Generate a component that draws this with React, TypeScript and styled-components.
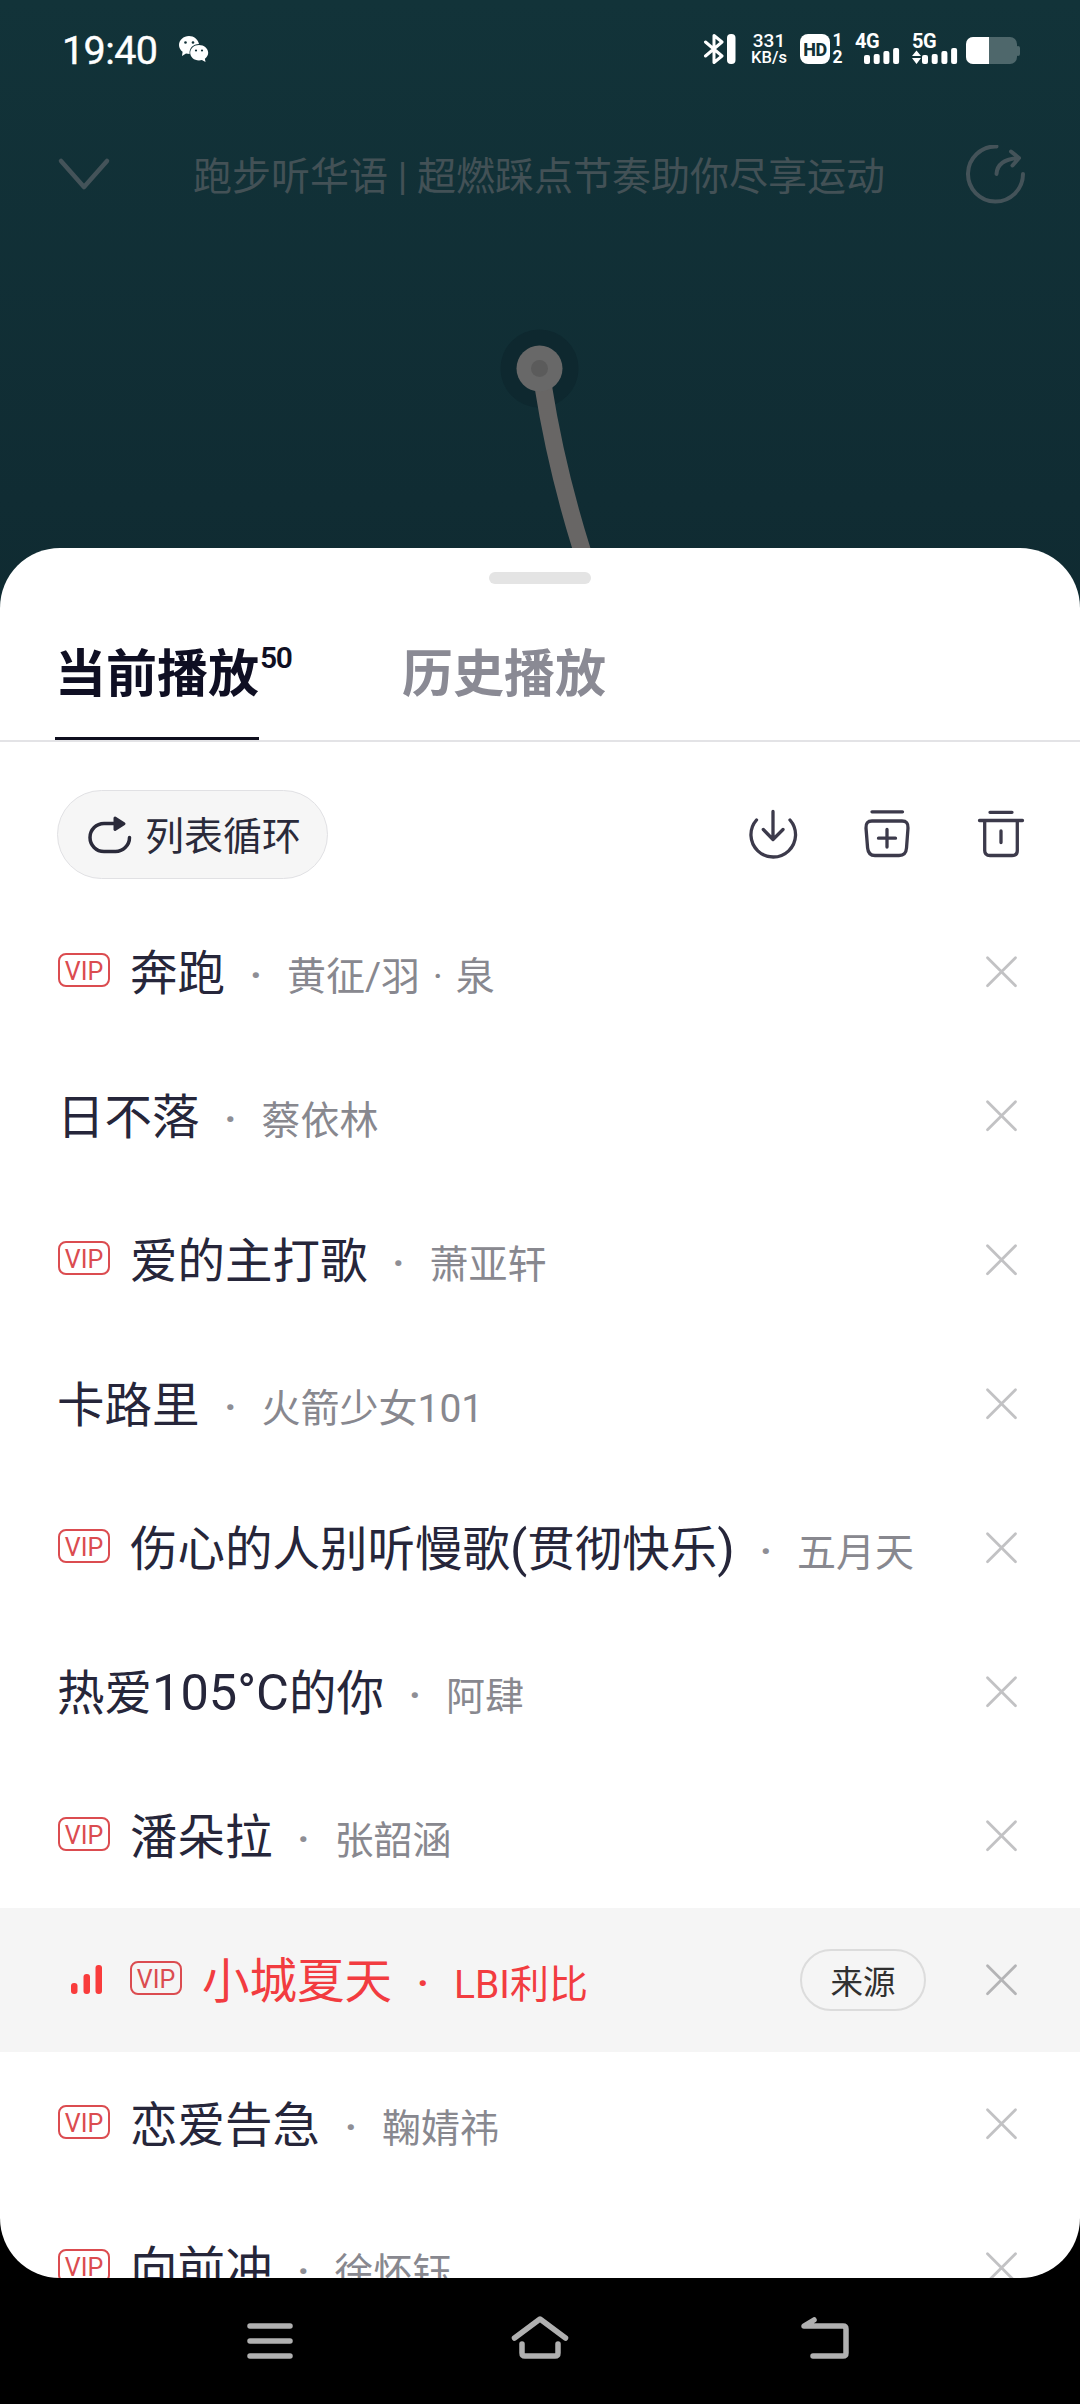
import React from "react";
import styled, { createGlobalStyle } from "styled-components";

const GlobalStyle = createGlobalStyle`
  *, *::before, *::after { box-sizing: border-box; }
  html, body { margin: 0; padding: 0; background: #000; }
  button { border: 0; padding: 0; margin: 0; background: none; font: inherit; color: inherit; display: flex; }
  svg { display: block; flex: none; }
`;

const Screen = styled.div`
  width: 1080px;
  height: 2404px;
  overflow: hidden;
  display: flex;
  flex-direction: column;
  font-family: Roboto, "Noto Sans CJK SC", sans-serif;
  background: linear-gradient(180deg, #123339 0, #102c33 500px, #0f2a30 700px, #000 700px);
`;

const StatusBar = styled.header`
  display: flex;
  align-items: center;
  justify-content: space-between;
  height: 97px;
  padding: 0 60px 0 62px;
  color: #fff;
`;

const StatusGroup = styled.div<{ $gap: number }>`
  display: flex;
  align-items: center;
  gap: ${(p) => p.$gap}px;
`;

const Clock = styled.time`
  width: 95px;
  font-size: 39.5px;
  line-height: 44px;
  letter-spacing: -0.6px;
  font-weight: 400;
  -webkit-text-stroke: 0.4px #fff;
  white-space: nowrap;
  padding-top: 4px;
`;

const NetSpeed = styled.div`
  width: 36px;
  height: 34px;
  display: flex;
  flex-direction: column;
  align-items: center;
  font-size: 19px;
  font-weight: 500;
  line-height: 17px;
  white-space: nowrap;
  margin: 0 13px 0 14px;
  small { font-size: 16.5px; line-height: 17px; }
`;

const HdBadge = styled.div`
  display: flex;
  gap: 1px;
  b {
    width: 30px;
    height: 30px;
    border-radius: 8px;
    background: #fff;
    color: #123238;
    font-size: 18px;
    line-height: 31px;
    text-align: center;
    letter-spacing: -0.5px;
    font-weight: 800;
  }
`;

const SimIndex = styled.div`
  width: 13px;
  display: flex;
  flex-direction: column;
  justify-content: space-between;
  text-align: center;
  font-size: 17.5px;
  line-height: 13px;
  font-weight: 700;
`;

const Signal = styled.div`
  width: 46px;
  height: 30px;
  margin-left: 11px;
  position: relative;
  svg { position: absolute; inset: 0; }
  b { position: absolute; left: 0; top: -2px; font-size: 20px; line-height: 18px; letter-spacing: -0.5px; }
`;

const BatteryBox = styled.div`
  margin-left: 8px;
  padding-top: 3px;
`;

const PlayerHeader = styled.div`
  display: flex;
  align-items: center;
  justify-content: space-between;
  height: 156px;
  padding: 0 54px 0 56px;
  color: #445359;
`;

const PlayerTitle = styled.h1`
  margin: 0;
  padding-top: 3px;
  font-size: 39px;
  line-height: 56px;
  font-weight: 400;
  color: #435156;
  white-space: nowrap;
`;

const Stage = styled.div`
  height: 295px;
  display: flex;
  justify-content: center;
`;

const Sheet = styled.main`
  height: 1730px;
  flex: none;
  border-radius: 60px;
  background: #fff;
  overflow: hidden;
  display: flex;
  flex-direction: column;
`;

const Handle = styled.div`
  width: 102px;
  height: 12px;
  border-radius: 6px;
  background: #e4e4e4;
  margin: 24px auto 0;
  flex: none;
`;

const Tabs = styled.nav`
  height: 158px;
  flex: none;
  display: flex;
  gap: 143px;
  padding-left: 55px;
  border-bottom: 2px solid #e3e3e6;
`;

const Tab = styled.button<{ $active?: boolean }>`
  position: relative;
  width: 204px;
  height: 156px;
  align-items: center;
  padding-top: 18px;
  font-size: 51px;
  font-weight: 700;
  white-space: nowrap;
  color: ${(p) => (p.$active ? "#0f0f23" : "#8a8a94")};
  border-bottom: 3px solid ${(p) => (p.$active ? "#0f0f1e" : "transparent")};
`;

const TabCount = styled.sup`
  position: absolute;
  left: 205px;
  top: 57px;
  font-size: 30px;
  line-height: 34px;
  font-weight: 600;
  letter-spacing: -1.5px;
`;

const Toolbar = styled.div`
  height: 158px;
  flex: none;
  display: flex;
  align-items: flex-start;
  justify-content: space-between;
  padding: 48px 54px 0 57px;
`;

const ModeButton = styled.button`
  width: 271px;
  height: 89px;
  border-radius: 45px;
  border: 1px solid #e1e1e4;
  background: #f6f6f6;
  align-items: center;
  padding: 0 0 3px 29px;
  gap: 13px;
  font-size: 39px;
  color: #2a2a3a;
  white-space: nowrap;
  svg { margin-top: 3px; }
`;

const Actions = styled.div`
  display: flex;
  gap: 64px;
  padding-top: 18px;
  color: #3c3a4b;
`;

const List = styled.ul`
  list-style: none;
  margin: 0;
  padding: 0;
`;

const Row = styled.li<{ $active?: boolean }>`
  height: 144px;
  display: flex;
  align-items: center;
  padding: 0 59px 0 57px;
  background: ${(p) => (p.$active ? "#f5f5f5" : "transparent")};
  color: ${(p) => (p.$active ? "#f23c40" : "#26263a")};
`;

const VipTag = styled.span`
  width: 52px;
  height: 34px;
  flex: none;
  margin: 0 20px 4px 1px;
  border: 2px solid #db4c50;
  border-radius: 8px;
  color: #db4c50;
  font-size: 25px;
  line-height: 34px;
  text-align: center;
`;

const SongName = styled.span`
  font-size: 47.5px;
  line-height: 70px;
  white-space: nowrap;
  padding-top: 3px;
`;

const Latin = styled.span`
  font-size: 50.5px;
`;

const Dot = styled.span<{ $active?: boolean }>`
  width: 62px;
  flex: none;
  text-align: center;
  font-size: 39px;
  font-weight: 700;
  line-height: 60px;
  padding-top: 6px;
  color: ${(p) => (p.$active ? "inherit" : "#8e8e95")};
`;

const Artist = styled.span<{ $active?: boolean }>`
  font-size: 39px;
  line-height: 60px;
  word-spacing: 3px;
  white-space: nowrap;
  padding-top: 9px;
  color: ${(p) => (p.$active ? "inherit" : "#88888f")};
`;

const RowEnd = styled.div<{ $active?: boolean }>`
  display: flex;
  align-items: center;
  gap: 55px;
  margin-left: auto;
  color: ${(p) => (p.$active ? "#b4b4b6" : "#c2c2c4")};
`;

const SourceButton = styled.button`
  width: 126px;
  height: 62px;
  border: 2px solid #dcdcdc;
  border-radius: 31px;
  align-items: center;
  justify-content: center;
  padding-bottom: 2px;
  font-size: 32.5px;
  color: #303030;
`;

const Playing = styled.svg`
  margin: 0 26px 0 14px;
`;

const NavBar = styled.footer`
  flex: 1;
  display: flex;
  justify-content: center;
  align-items: center;
  gap: 206px;
  padding: 0 0 6px 10px;
  color: #b0b0b0;
`;

type Song = { name: string; artist: string; vip?: boolean; active?: boolean };

const songs: Song[] = [
  { name: "奔跑", artist: "黄征/羽 · 泉", vip: true },
  { name: "日不落", artist: "蔡依林" },
  { name: "爱的主打歌", artist: "萧亚轩", vip: true },
  { name: "卡路里", artist: "火箭少女101" },
  { name: "伤心的人别听慢歌(贯彻快乐)", artist: "五月天", vip: true },
  { name: "热爱105°C的你", artist: "阿肆" },
  { name: "潘朵拉", artist: "张韶涵", vip: true },
  { name: "小城夏天", artist: "LBI利比", vip: true, active: true },
  { name: "恋爱告急", artist: "鞠婧祎", vip: true },
  { name: "向前冲", artist: "徐怀钰", vip: true },
];

/** Sets the Latin runs inside a Chinese title slightly larger. */
const mixed = (text: string) =>
  text
    .split(/([\x21-\x7e\u00b0]+)/)
    .map((part, i) => (i % 2 ? <Latin key={i}>{part}</Latin> : part));

const line = {
  fill: "none",
  stroke: "currentColor",
  strokeLinecap: "round" as const,
  strokeLinejoin: "round" as const,
};

const WeChatIcon = () => (
  <svg width="30" height="26" viewBox="0 0 30 26">
    <path fill="#fff" d="M10 0C4.500 0 0 4 0 9c0 2.800 1.400 5.200 3.600 6.800L3 20l4-2.400c1.200.3 2.400.4 3.600.4C10 12 14 8.200 20 8 19 3.400 15 0 10 0z" />
    <path fill="#fff" d="M20 9c-5 0-8.800 3.500-8.800 7.800S15 24.500 20 24.500c1 0 2-.1 2.900-.4L26.500 26l-.6-3.200c2-1.500 3.300-3.600 3.300-6C29.200 12.500 25 9 20 9z" />
    <g fill="#123238"><circle cx="6.500" cy="6.500" r="1.300" /><circle cx="14" cy="6.500" r="1.300" /><circle cx="17" cy="14.500" r="1.100" /><circle cx="23" cy="14.500" r="1.100" /></g>
  </svg>
);

const BluetoothIcon = () => (
  <svg width="34" height="30" viewBox="0 0 34 30">
    <path {...line} strokeWidth="3" d="M2.500 8 19 22l-8 6.500V1.500L19 8 2.500 22" />
    <rect x="24" y="0" width="8.500" height="30" rx="4" fill="#fff" />
  </svg>
);

const SignalBars = ({ data }: { data?: boolean }) => (
  <svg width="46" height="30" viewBox="0 0 46 30">
    {[21, 20, 17, 14].map((y, i) => (
      <rect key={i} x={(data ? 10 : 9) + i * 9.700} y={y} width="6" height={30 - y} rx="2" fill="#fff" />
    ))}
    {data && <path fill="#fff" d="M4.500 16.500 9 22H0zM0 24h9l-4.500 6z" />}
  </svg>
);

const BatteryIcon = () => (
  <svg width="54" height="27" viewBox="0 0 54 27">
    <rect width="51" height="27" rx="7" fill="#4e676b" />
    <rect x="50" y="9" width="4" height="10" rx="2" fill="#4e676b" />
    <path d="M7 0h16v27H7a7 7 0 0 1-7-7V7a7 7 0 0 1 7-7z" fill="#fff" />
  </svg>
);

const CloseIcon = () => (
  <svg width="40" height="40" viewBox="0 0 40 40">
    <path {...line} strokeWidth="2.800" d="M6.500 5.800 34.500 33.800M34.500 5.800 6.500 33.800" />
  </svg>
);

export default function App() {
  return (
    <Screen>
      <GlobalStyle />
      <StatusBar>
        <StatusGroup $gap={22}>
          <Clock>19:40</Clock>
          <WeChatIcon />
        </StatusGroup>
        <StatusGroup $gap={0}>
          <BluetoothIcon />
          <NetSpeed><span>331</span><small>KB/s</small></NetSpeed>
          <HdBadge>
            <b>HD</b>
            <SimIndex><span>1</span><span>2</span></SimIndex>
          </HdBadge>
          <Signal><SignalBars /><b>4G</b></Signal>
          <Signal><SignalBars data /><b>5G</b></Signal>
          <BatteryBox><BatteryIcon /></BatteryBox>
        </StatusGroup>
      </StatusBar>

      <PlayerHeader>
        <svg width="56" height="60" viewBox="0 0 56 60">
          <path {...line} strokeWidth="4.500" d="M5 16 28 42 51 16" />
        </svg>
        <PlayerTitle>跑步听华语 | 超燃踩点节奏助你尽享运动</PlayerTitle>
        <svg width="60" height="60" viewBox="0 0 60 60">
          <path {...line} strokeWidth="4" d="M30.500 1.500A27.500 27.500 0 1 0 57 29" />
          <path {...line} strokeWidth="4" d="M30.500 29C31 20 37.500 14 53 13M45 6.500 53 13 46.500 20.500" />
        </svg>
      </PlayerHeader>

      <Stage>
        <svg width="240" height="295" viewBox="420 253 240 295">
          <circle cx="539.500" cy="368.500" r="39" fill="#0e282f" />
          <path d="M543 385Q556 468 582.500 552" fill="none" stroke="#686665" strokeWidth="17.500" />
          <circle cx="539.500" cy="368.500" r="23" fill="#686868" />
          <circle cx="539.500" cy="368.500" r="8.500" fill="#5b5b5b" />
        </svg>
      </Stage>

      <Sheet>
        <Handle />
        <Tabs>
          <Tab $active>当前播放<TabCount>50</TabCount></Tab>
          <Tab>历史播放</Tab>
        </Tabs>

        <Toolbar>
          <ModeButton>
            <svg width="45" height="42" viewBox="0 0 45 42">
              <path {...line} strokeWidth="3.500" d="M28 9.500H17A14 14 0 0 0 17 37.500H28A14 14 0 0 0 42.500 23.500" />
              <path d="M28 4 37 9.800 28 15.500z" fill="currentColor" stroke="currentColor" strokeWidth="3" strokeLinejoin="round" />
            </svg>
            列表循环
          </ModeButton>
          <Actions>
            <svg width="50" height="52" viewBox="749 808 50 52">
              <path {...line} strokeWidth="3.300" d="M757.500 820A22.300 22.300 0 1 0 791 820M774 811.500V839.500M764.300 829.500 774 839.500 784 829.500" />
            </svg>
            <svg width="50" height="52" viewBox="863 808 50 52">
              <path {...line} strokeWidth="3.300" d="M873 811.800H903.500M888 829.500V847M879.500 838.200H896.500M873 821H903Q909.500 821 909 828L907.500 848Q907 855.500 900 855.500H876Q869.300 855.500 868.600 848L867 828Q866.500 821 873 821Z" />
            </svg>
            <svg width="50" height="52" viewBox="977 808 50 52">
              <path {...line} strokeWidth="3.300" d="M991 812.300H1013M980.500 820.500H1023.500M985.700 820.500V850.500Q985.700 855.500 991 855.500H1013Q1018.300 855.500 1018.300 850.500V820.500M1002 831V842.500" />
            </svg>
          </Actions>
        </Toolbar>

        <List>
          {songs.map((s) => (
            <Row key={s.name} $active={s.active}>
              {s.active && (
                <Playing width="32" height="32" viewBox="0 0 32 32" fill="#f93c3c">
                  <rect x="0" y="19" width="6.500" height="11" rx="3" />
                  <rect x="12.500" y="10" width="6.500" height="20" rx="3" />
                  <rect x="24.500" y="1" width="6.500" height="29" rx="3" />
                </Playing>
              )}
              {s.vip && <VipTag>VIP</VipTag>}
              <SongName>{mixed(s.name)}</SongName>
              <Dot $active={s.active}>·</Dot>
              <Artist $active={s.active}>{s.artist}</Artist>
              <RowEnd $active={s.active}>
                {s.active && <SourceButton>来源</SourceButton>}
                <button aria-label="移除"><CloseIcon /></button>
              </RowEnd>
            </Row>
          ))}
        </List>
      </Sheet>

      <NavBar>
        <svg width="64" height="48" viewBox="238 2314 64 48">
          <path {...line} strokeWidth="5.500" d="M250 2326H290M250 2341H290M250 2356H290" />
        </svg>
        <svg width="64" height="48" viewBox="508 2314 64 48">
          <path {...line} strokeWidth="5.500" d="M514.500 2338 540 2319 565.500 2338M522 2344V2353Q522 2356 525 2356H555Q558 2356 558 2353V2344" />
        </svg>
        <svg width="74" height="48" viewBox="778 2314 74 48">
          <path {...line} strokeWidth="5.500" d="M813 2356H843Q846 2356 846 2353V2329Q846 2326 843 2326H804L814 2320" />
        </svg>
      </NavBar>
    </Screen>
  );
}
